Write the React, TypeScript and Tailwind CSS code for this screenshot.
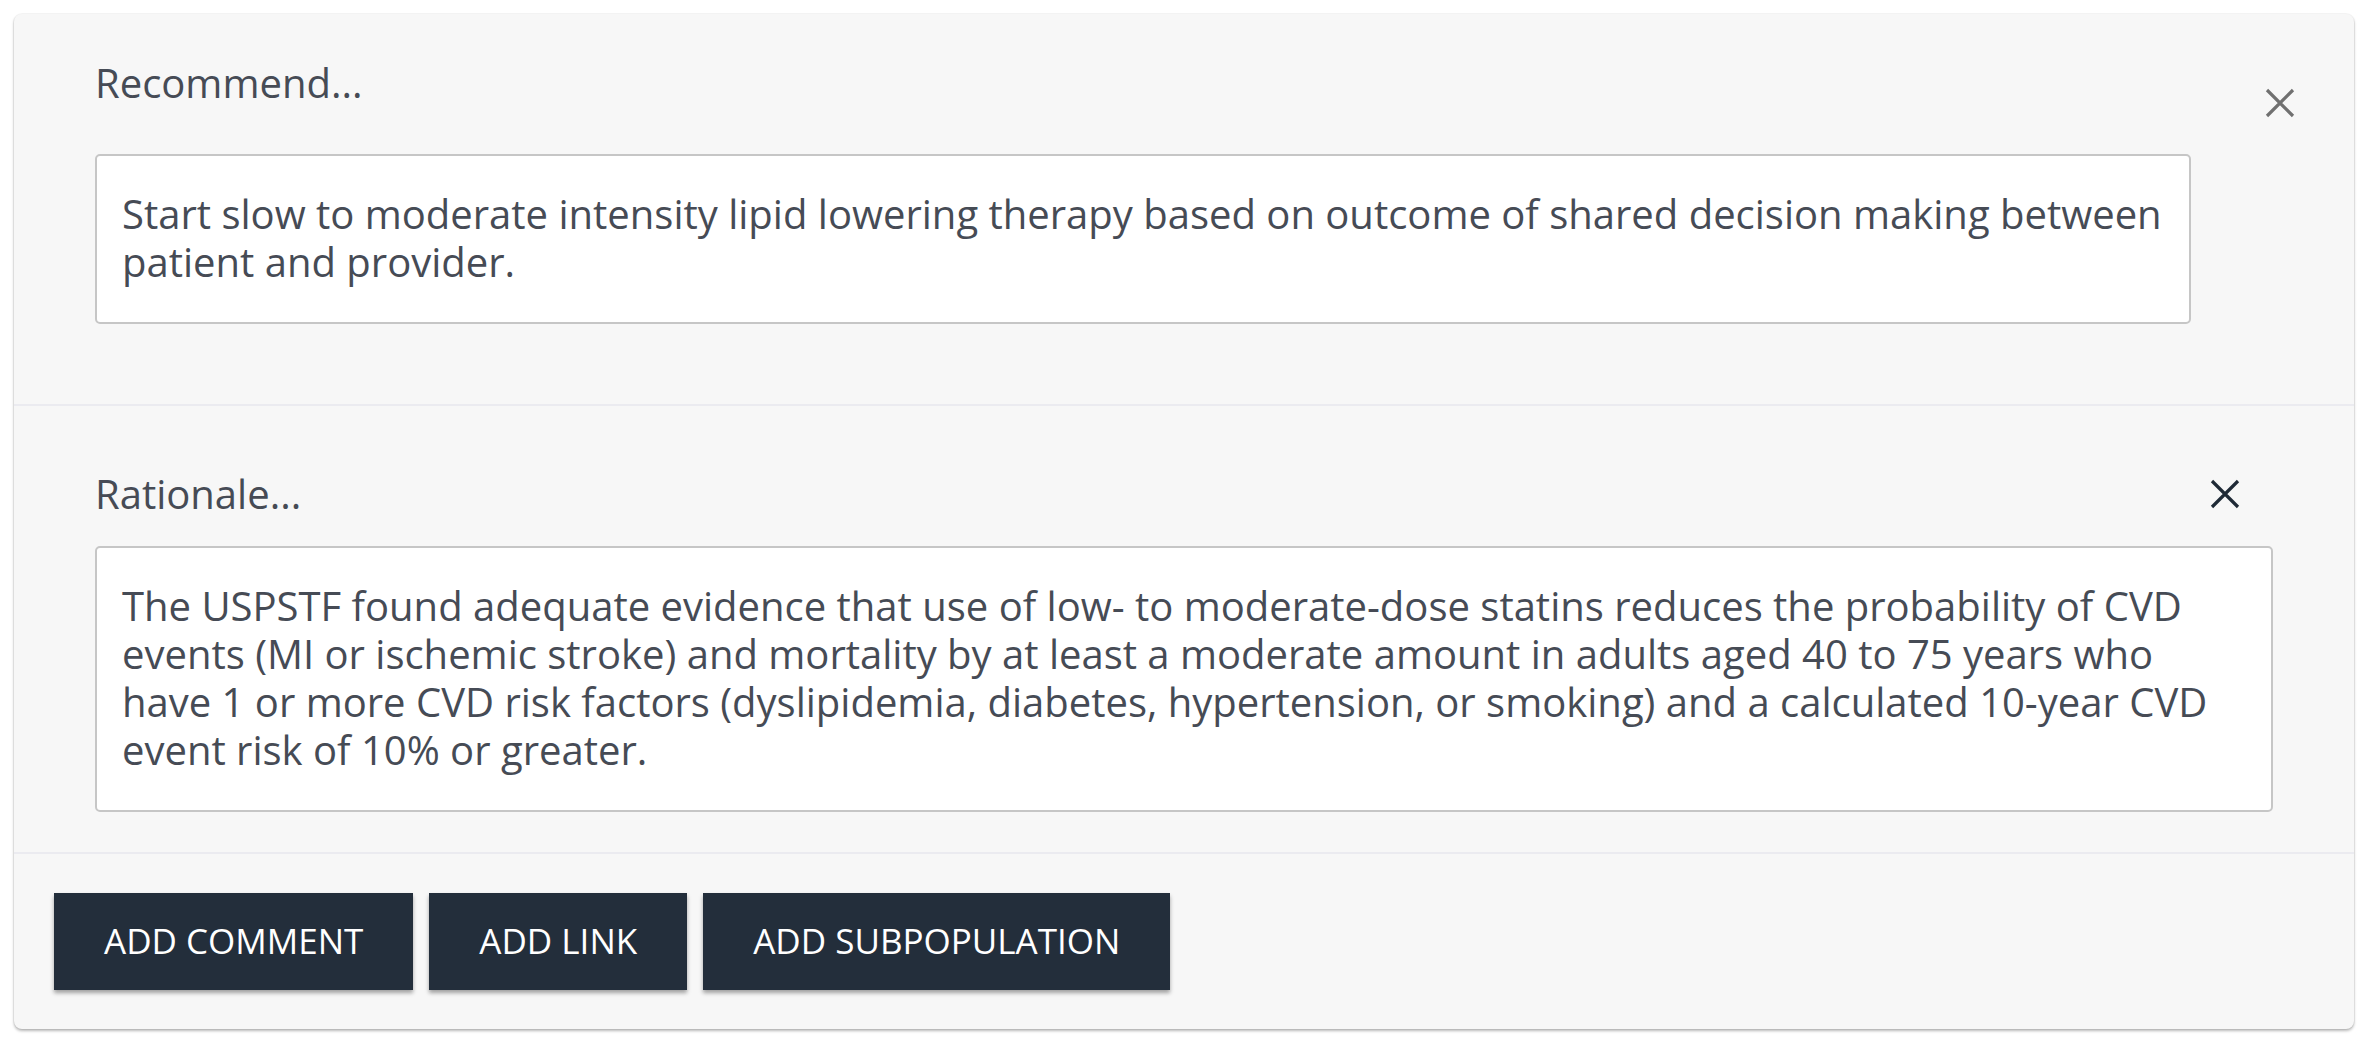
import React from 'react';

const CloseIcon: React.FC<{ color: string }> = ({ color }) => (
  <svg width="30" height="30" viewBox="0 0 30 30" fill="none">
    <path d="M2 2 L28 28 M28 2 L2 28" stroke={color} strokeWidth="3.2" />
  </svg>
);

const Field: React.FC<{ text: string }> = ({ text }) => (
  <div className="bg-white border-2 border-[#c6c6c6] rounded-[5px] px-[25px] pt-[34px] pb-[36px] text-[40px] leading-[48px] text-[#464b55]">
    {text}
  </div>
);

const App: React.FC = () => {
  return (
    <div className="min-h-screen bg-white p-[14px] font-['Open_Sans',sans-serif]">
      <div className="rounded-[8px] bg-[#f7f7f7] shadow-[0_2px_3px_rgba(0,0,0,0.28),0_0_0_1px_rgba(0,0,0,0.04)]">
        <section className="flex pl-[81px] pr-[59px] pt-[45px] pb-[80px] border-b-2 border-[#ebebf0]">
          <div className="flex-1 flex flex-col gap-[47px]">
            <p className="text-[40px] leading-[48px] text-[#464b55]">Recommend...</p>
            <Field text="Start slow to moderate intensity lipid lowering therapy based on outcome of shared decision making between patient and provider." />
          </div>
          <button className="ml-[74px] mt-[29px] self-start w-[30px] h-[30px]">
            <CloseIcon color="#707070" />
          </button>
        </section>

        <section className="px-[81px] pt-[64px] pb-[40px] border-b-2 border-[#ebebf0]">
          <div className="flex items-center justify-between mb-[28px]">
            <p className="text-[40px] leading-[48px] text-[#464b55]">Rationale...</p>
            <button className="mr-[33px] w-[30px] h-[30px]">
              <CloseIcon color="#1f2a36" />
            </button>
          </div>
          <Field text="The USPSTF found adequate evidence that use of low- to moderate-dose statins reduces the probability of CVD events (MI or ischemic stroke) and mortality by at least a moderate amount in adults aged 40 to 75 years who have 1 or more CVD risk factors (dyslipidemia, diabetes, hypertension, or smoking) and a calculated 10-year CVD event risk of 10% or greater." />
        </section>

        <section className="flex gap-[16px] px-[40px] py-[39px]">
          {['ADD COMMENT', 'ADD LINK', 'ADD SUBPOPULATION'].map((label) => (
            <button
              key={label}
              className="h-[97px] px-[50px] bg-[#232e3b] text-white text-[35px] shadow-[0_3px_4px_rgba(0,0,0,0.35)]"
            >
              {label}
            </button>
          ))}
        </section>
      </div>
    </div>
  );
};

export default App;
